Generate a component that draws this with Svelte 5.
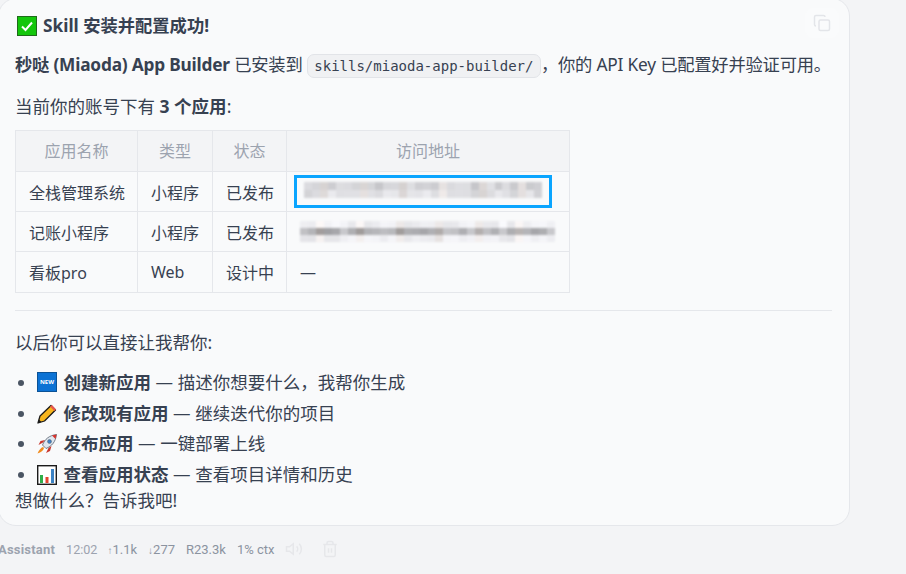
<script>
  // Stand-in for the blurred URLs: a deterministic grey mosaic, a few rows of cells
  function mosaic(count, seed, base, spread) {
    return Array.from({ length: count }, (_, i) => {
      const n = Math.sin((i + 1) * 12.9898 + seed * 78.233) * 43758.5453;
      const v = Math.round(base + (n - Math.floor(n)) * spread);
      const warm = i % 5 === 2 ? 5 : 0;
      return `rgb(${v + warm},${v},${v + 4 - warm})`;
    });
  }

  const urlA = [mosaic(30, 1, 192, 32), mosaic(30, 2, 205, 30)];
  const urlB = [mosaic(32, 3, 228, 22), mosaic(32, 4, 146, 50), mosaic(32, 5, 222, 24)];

  const rows = [
    { name: '全栈管理系统', type: '小程序', status: '已发布', url: 'boxed' },
    { name: '记账小程序', type: '小程序', status: '已发布', url: 'plain' },
    { name: '看板pro', type: 'Web', status: '设计中', url: 'none' }
  ];
</script>

<div class="page">
  <div class="bubble">
    <button class="copy" aria-label="复制">
      <svg viewBox="0 0 24 24" width="18" height="18" fill="none" stroke="#e3e5e9" stroke-width="2">
        <rect x="8" y="8" width="14" height="14" rx="2" />
        <path d="M4 16c-1.100 0-2-.9-2-2V4c0-1.100.9-2 2-2h10c1.100 0 2 .9 2 2" />
      </svg>
    </button>

    <h3>
      <svg class="emoji" viewBox="0 0 20 20" width="20" height="20">
        <rect x="0.500" y="0.500" width="19" height="19" fill="#14c60c" stroke="#1f6b1a" />
        <path d="M5 10.500 8.500 14 15 6.500" fill="none" stroke="#fff" stroke-width="2" />
      </svg>
      <span>Skill 安装并配置成功!</span>
    </h3>

    <p class="intro">
      <strong>秒哒 (Miaoda) App Builder</strong> 已安装到 <code>skills/miaoda-app-builder/</code>&#xFF0C;你的 API Key 已配置好并验证可用。
    </p>
    <p class="count">当前你的账号下有 <strong>3 个应用</strong>:</p>

    <table>
      <thead>
        <tr><th class="c1">应用名称</th><th class="c2">类型</th><th class="c3">状态</th><th class="c4">访问地址</th></tr>
      </thead>
      <tbody>
        {#each rows as row}
          <tr>
            <td>{row.name}</td>
            <td>{row.type}</td>
            <td>{row.status}</td>
            <td>
              {#if row.url === 'boxed'}
                <div class="focus">
                  <div class="mosaic">
                    {#each urlA as strip}
                      <div class="strip">
                        {#each strip as c}<i style:background={c}></i>{/each}
                      </div>
                    {/each}
                  </div>
                </div>
              {:else if row.url === 'plain'}
                <div class="mosaic wide">
                  {#each urlB as strip}
                    <div class="strip">
                      {#each strip as c}<i style:background={c}></i>{/each}
                    </div>
                  {/each}
                </div>
              {:else}
                —
              {/if}
            </td>
          </tr>
        {/each}
      </tbody>
    </table>

    <hr />

    <p class="lead">以后你可以直接让我帮你:</p>

    <ul>
      <li>
        <span class="new">NEW</span>
        <strong>创建新应用</strong> — 描述你想要什么&#xFF0C;我帮你生成
      </li>
      <li>
        <svg class="emoji" viewBox="0 0 20 20" width="20" height="20">
          <path d="M1 19 3 12 14 1.500 18.500 6 7.500 17Z" fill="#f7b51c" stroke="#1b1b1b" stroke-width="1.300" stroke-linejoin="round" />
          <path d="M13 2.500 17.500 7 19 5.500 15 1Z" fill="#e8574f" />
          <path d="M1 19 2 15.500 4.500 18Z" fill="#1b1b1b" />
        </svg>
        <strong>修改现有应用</strong> — 继续迭代你的项目
      </li>
      <li>
        <svg class="emoji" viewBox="0 0 20 20" width="20" height="20">
          <path d="M5.500 11C8 5 12 1.500 19.500 .5c-1 7.500-4.500 11.500-10.500 14Z" fill="#dfe6ee" stroke="#55606c" stroke-width="0.800" />
          <path d="M15 1.500 19.500 .5l-1 4.500Z" fill="#d8332c" />
          <circle cx="12.500" cy="7.500" r="2" fill="#3f7fc4" stroke="#55606c" stroke-width="0.500" />
          <path d="M6 8.500 1.500 11l2-4L8 6Z M11.500 14l-2.500 5 4-2 1.500-5Z" fill="#c9362d" />
          <path d="M6 13c-2 .5-4 3-5.500 6.500 3.500-1 6-3 6.500-5.500Z" fill="#f08a1d" />
        </svg>
        <strong>发布应用</strong> — 一键部署上线
      </li>
      <li>
        <svg class="emoji" viewBox="0 0 20 20" width="20" height="20">
          <rect x="0.700" y="0.700" width="18.600" height="18.600" fill="#fff" stroke="#1b1b1b" stroke-width="1.400" />
          <rect x="3" y="10" width="3" height="8" fill="#2fae4a" />
          <rect x="8.500" y="12" width="3" height="6" fill="#e2452f" />
          <rect x="14" y="4" width="3" height="14" fill="#3b82c4" />
        </svg>
        <strong>查看应用状态</strong> — 查看项目详情和历史
      </li>
    </ul>
    <p class="end">想做什么&#xFF1F;告诉我吧!</p>
  </div>

  <div class="meta">
    <span class="who">Assistant</span>
    <span class="time">12:02</span>
    <span class="stats">
      <span><span class="arrow">↑</span>1.1k</span>
      <span><span class="arrow">↓</span>277</span>
      <span>R23.3k</span>
      <span>1% ctx</span>
    </span>
    <svg class="speaker" viewBox="0 0 24 24" width="18" height="18" fill="none" stroke="#e6e7ea" stroke-width="2">
      <path d="M11 5 6 9H2v6h4l5 4Z" />
      <path d="M15.500 8.500a5 5 0 0 1 0 7M19 5a10 10 0 0 1 0 14" />
    </svg>
    <svg viewBox="0 0 24 24" width="18" height="18" fill="none" stroke="#e6e7ea" stroke-width="2">
      <path d="M3 6h18M19 6v14a2 2 0 0 1-2 2H7a2 2 0 0 1-2-2V6M8 6V4a2 2 0 0 1 2-2h4a2 2 0 0 1 2 2v2M10 11v6M14 11v6" />
    </svg>
  </div>
</div>

<style>
  :global(body) {
    background: #f3f4f6;
    overflow: hidden;
  }
  .page {
    width: 906px;
    height: 574px;
    overflow: hidden;
    color: #374151;
    font-family: "Noto Sans", "Noto Sans CJK SC", sans-serif;
    font-size: 17.500px;
  }
  .bubble {
    position: relative;
    box-sizing: border-box;
    width: 852px;
    height: 528px;
    margin: -2px 0 0 -2px;
    padding: 17px 17px 0 16px;
    background: #f9fafb;
    border: 1px solid #e5e7eb;
    border-radius: 18px;
  }
  .copy {
    position: absolute;
    top: 9px;
    right: 10px;
    width: 34px;
    height: 30px;
    display: flex;
    align-items: center;
    justify-content: center;
    background: #fafbfc;
    border: none;
    border-radius: 8px;
    padding: 0;
  }
  h3 {
    display: flex;
    align-items: center;
    gap: 6px;
    margin: 0 0 0 2px;
    height: 20px;
    font-size: 17.300px;
    font-weight: 700;
    line-height: 20px;
  }
  strong {
    font-weight: 700;
  }
  p {
    margin: 0;
    line-height: 26px;
  }
  .intro {
    margin-top: 16px;
    font-size: 17.300px;
    white-space: nowrap;
    letter-spacing: -0.2px;
  }
  .count {
    margin-top: 15px;
  }
  code {
    display: inline-block;
    padding: 0 6.500px;
    font-family: "DejaVu Sans Mono", monospace;
    font-size: 14px;
    line-height: 22px;
    letter-spacing: 0;
    background: #f0f1f3;
    border: 1px solid #e2e4e8;
    border-radius: 7px;
  }
  table {
    margin-top: 11px;
    border-collapse: collapse;
    table-layout: fixed;
    width: 554px;
    font-size: 16px;
  }
  th,
  td {
    border: 1px solid #e5e7eb;
    padding: 0 13px;
    height: 40px;
    box-sizing: border-box;
    text-align: left;
    font-weight: 400;
    white-space: nowrap;
  }
  tbody tr:last-child td {
    height: 41px;
  }
  th {
    height: 41px;
    padding-bottom: 2px;
    background: #f3f4f6;
    color: #9ca3af;
    text-align: center;
  }
  .c1 { width: 122px; }
  .c2 { width: 75px; }
  .c3 { width: 74px; }
  .c4 { width: 283px; }
  .focus {
    box-sizing: border-box;
    width: 258px;
    height: 33px;
    margin-left: -6px;
    padding: 4px 7px;
    border: 3px solid #0aa5ff;
  }
  .mosaic {
    display: flex;
    flex-direction: column;
    filter: blur(0.800px);
    opacity: 0.9;
  }
  .mosaic.wide {
    width: 255px;
  }
  .strip {
    display: flex;
    height: 8px;
  }
  .wide .strip {
    height: 7px;
  }
  .strip i {
    flex: 1;
  }
  hr {
    margin: 17px 0 0;
    border: none;
    border-top: 1px solid #e5e7eb;
  }
  .lead {
    margin-top: 18px;
  }
  ul {
    margin: 12px 0 0;
    padding: 0 0 0 22px;
  }
  li {
    line-height: 30.500px;
    white-space: nowrap;
  }
  li::marker {
    color: #4b5563;
  }
  .emoji {
    flex: none;
    vertical-align: -4px;
  }
  li .emoji,
  .new {
    margin-right: 2px;
  }
  .new {
    display: inline-block;
    width: 20px;
    height: 20px;
    line-height: 18px;
    vertical-align: -3px;
    text-align: center;
    font-size: 6px;
    font-weight: 700;
    color: #fff;
    background: #0c72d4;
    border: 1px solid #0b5296;
    box-sizing: border-box;
    overflow: hidden;
  }
  .end {
    margin-top: -2px;
  }
  .meta {
    display: flex;
    align-items: center;
    gap: 10px;
    margin: 12px 0 0 -2px;
    height: 22px;
    font-family: Roboto, sans-serif;
    font-size: 13px;
    color: #9ca3af;
  }
  .who {
    font-weight: 700;
    letter-spacing: 0.2px;
  }
  .time {
    margin-left: 1px;
    font-size: 12.600px;
  }
  .stats {
    display: flex;
    gap: 11px;
    color: #8b93a0;
  }
  .arrow {
    font-size: 10px;
  }
  .speaker {
    margin-right: 8px;
  }
</style>
